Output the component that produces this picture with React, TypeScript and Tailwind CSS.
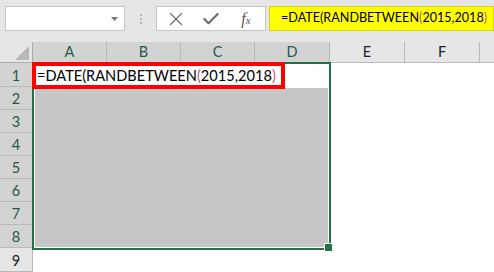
import { Check, X } from "lucide-react";

const COLS = [
  { id: "A", w: "w-[74px]", sel: true },
  { id: "B", w: "w-[74px]", sel: true },
  { id: "C", w: "w-[74px]", sel: true },
  { id: "D", w: "w-[75px]", sel: true },
  { id: "E", w: "w-[75px]", sel: false },
  { id: "F", w: "w-[75px]", sel: false },
];

const ROWS = [
  { n: 1, h: "h-[24px]", sel: true },
  { n: 2, h: "h-[23px]", sel: true },
  { n: 3, h: "h-[23px]", sel: true },
  { n: 4, h: "h-[23px]", sel: true },
  { n: 5, h: "h-[23px]", sel: true },
  { n: 6, h: "h-[23px]", sel: true },
  { n: 7, h: "h-[23px]", sel: true },
  { n: 8, h: "h-[23px]", sel: true },
  { n: 9, h: "h-[24px]", sel: false },
];

function Formula() {
  return (
    <>
      =DATE(RANDBETWEEN<span className="text-[#c94f9a]">(</span>2015,2018
      <span className="text-[#d9507a]">)</span>
    </>
  );
}

export default function App() {
  return (
    <div className="w-[494px] h-[272px] overflow-hidden bg-white font-['Lato',sans-serif] text-black">
      {/* formula bar */}
      <div className="h-[42px] bg-[#e6e6e6] flex items-start pt-[6px] pl-[5px]">
        <div className="shrink-0 w-[120px] h-[25px] bg-white border border-[#c6c6c6] flex items-center justify-end pr-[6px]">
          <svg width="7" height="4" viewBox="0 0 7 4">
            <path d="M0 0h7L3.5 4z" fill="#777" />
          </svg>
        </div>
        <div className="shrink-0 w-[31px] h-[25px] flex flex-col items-center justify-center gap-[2px]">
          <span className="w-[2px] h-[2px] bg-[#b5b5b5]" />
          <span className="w-[2px] h-[2px] bg-[#b5b5b5]" />
          <span className="w-[2px] h-[2px] bg-[#b5b5b5]" />
        </div>
        <div className="shrink-0 w-[110px] h-[25px] bg-white border border-[#c6c6c6] flex items-center">
          <div className="w-[37px] flex justify-center">
            <X className="size-[22px] text-[#6b6b6b]" strokeWidth={1.3} />
          </div>
          <div className="w-[33px] flex justify-center">
            <Check className="size-[20px] text-[#6b6b6b]" strokeWidth={2.6} />
          </div>
          <div className="w-[38px] flex justify-center">
            <span className="font-['Liberation_Serif',serif] italic text-[16px] text-[#555] leading-none">
              f<span className="text-[11px]">x</span>
            </span>
          </div>
        </div>
        <div className="ml-[3px] min-w-0 flex-1 h-[25px] bg-[#ffff00] border border-[#d8d800] flex items-center pl-[11px] text-[12.6px] whitespace-nowrap overflow-hidden">
          <Formula />
        </div>
      </div>

      {/* column headers */}
      <div className="h-[21px] flex">
        <div className="shrink-0 w-[33px] bg-[#e6e6e6] border-r border-b border-[#ababab] flex items-end justify-end pr-[3px] pb-[2px]">
          <svg width="14" height="14" viewBox="0 0 14 14">
            <path d="M14 0v14H0z" fill="#b8b8b8" />
          </svg>
        </div>
        {COLS.map((c) => (
          <div
            key={c.id}
            className={`${c.w} shrink-0 border-r border-b border-[#b9b9b9] flex items-center justify-center text-[14.5px] ${
              c.sel ? "bg-[#d3d3d3] text-[#1f5a44]" : "bg-[#e6e6e6] text-[#222]"
            }`}
          >
            {c.id}
          </div>
        ))}
        <div className="flex-1 bg-[#e6e6e6] border-b border-[#b9b9b9]" />
      </div>

      {/* body */}
      <div className="flex">
        <div className="shrink-0 w-[33px] flex flex-col">
          {ROWS.map((r) => (
            <div
              key={r.n}
              className={`${r.h} border-r border-b border-[#b9b9b9] flex items-center justify-center pt-[2px] text-[14.5px] ${
                r.sel ? "bg-[#d3d3d3] text-[#1f5a44]" : "bg-[#e6e6e6] text-[#222]"
              }`}
            >
              {r.n}
            </div>
          ))}
        </div>

        <div className="flex-1">
          <div className="relative -ml-[1px] -mt-[1px] w-[299px] h-[188px] border-2 border-[#217346] flex flex-col">
            <div className="h-[24px] bg-white" />
            <div className="flex-1 px-px pb-px bg-white">
              <div className="h-full bg-[#c6c6c6]" />
            </div>

            {/* active cell highlight */}
            <div className="absolute -left-[2px] -top-[2px] w-[253px] h-[27px] border-4 border-[#ff0000] bg-white flex items-center pl-px text-[14.6px] whitespace-nowrap">
              <Formula />
            </div>

            {/* fill handle */}
            <div className="absolute -right-[3px] -bottom-[3px] w-[7px] h-[7px] bg-[#217346] outline outline-1 outline-white" />
          </div>
        </div>
      </div>
    </div>
  );
}
